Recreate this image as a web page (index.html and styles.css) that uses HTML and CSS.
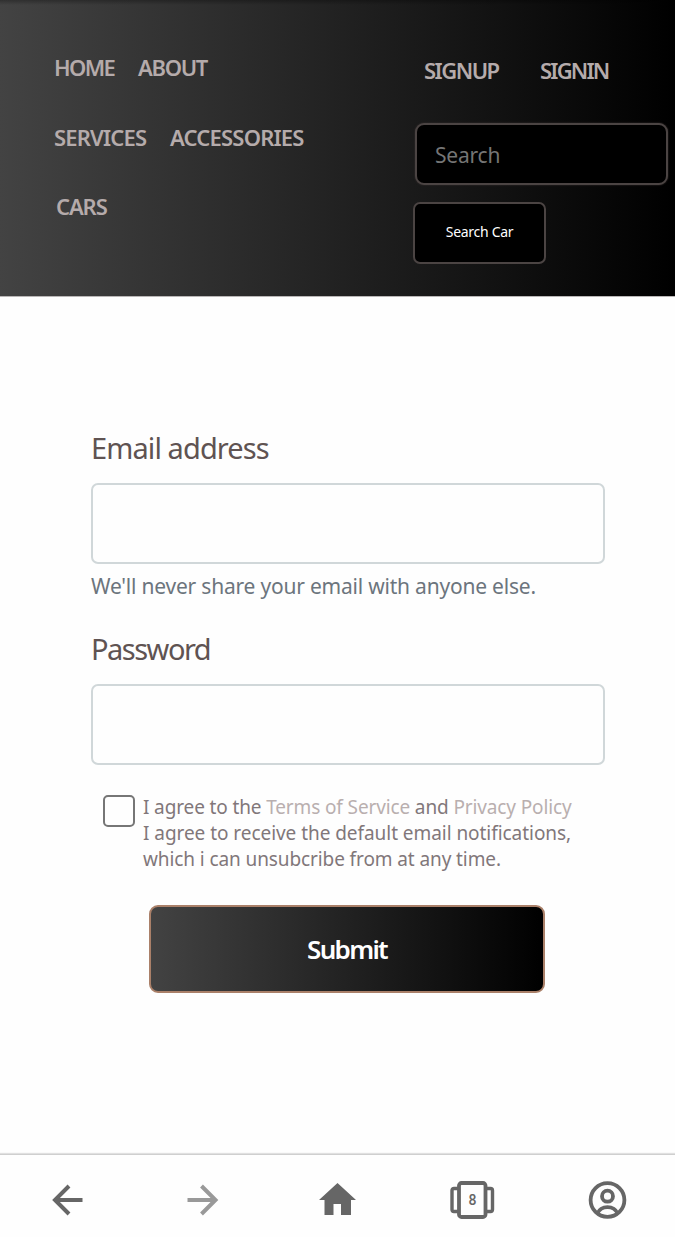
FILE: index.html
```html
<!DOCTYPE html>
<html lang="en">
<head>
<meta charset="utf-8">
<meta name="viewport" content="width=device-width, initial-scale=1">
<title>Sign in</title>
<link rel="stylesheet" href="styles.css">
</head>
<body>
<header class="header">
  <nav class="menu">
    <div class="menu-row"><a class="link home">HOME</a><a class="link about">ABOUT</a></div>
    <div class="menu-row"><a class="link services">SERVICES</a><a class="link accessories">ACCESSORIES</a></div>
    <div class="menu-row last"><a class="link cars">CARS</a></div>
  </nav>
  <div class="tools">
    <div class="account"><a class="link signup">SIGNUP</a><a class="link signin">SIGNIN</a></div>
    <input class="search" type="text" placeholder="Search">
    <button class="search-button">Search Car</button>
  </div>
</header>
<main class="content">
  <form class="form">
    <label class="label email" for="email">Email address</label>
    <input class="field" id="email" type="text">
    <p class="hint">We'll never share your email with anyone else.</p>
    <label class="label password" for="password">Password</label>
    <input class="field" id="password" type="password">
    <div class="agree">
      <input class="check" type="checkbox">
      <div class="terms">
        <div class="line1">I agree to the <a class="terms-link">Terms of Service</a> and <a class="terms-link">Privacy Policy</a></div>
        <div class="line2">I agree to receive the default email notifications,</div>
        <div class="line3">which i can unsubcribe from at any time.</div>
      </div>
    </div>
    <button class="submit" type="button">Submit</button>
  </form>
</main>
<footer class="toolbar">
  <div class="tab"><svg width="46" height="46" viewBox="0 0 46 46" fill="none" stroke="#666" stroke-width="4"><path d="M37.500 23H10M24 9L10 23l14 14"/></svg></div>
  <div class="tab"><svg width="46" height="46" viewBox="0 0 46 46" fill="none" stroke="#999" stroke-width="4"><path d="M7.500 23H35M21.500 9l14 14-14 14"/></svg></div>
  <div class="tab"><svg width="46" height="46" viewBox="0 0 46 46"><path fill="#666" d="M22.500 6L4 23h5.500v15h9V27h7.500v11h10V23h5z"/></svg></div>
  <div class="tab"><svg width="46" height="46" viewBox="0 0 46 46" fill="none" stroke="#666"><rect x="9" y="6" width="26.500" height="34" rx="2.500" stroke-width="3.800"/><path d="M8.500 11.500H4q-2 0-2 2v19q0 2 2 2h4.500M36 11.500h4.500q2 0 2 2v19q0 2-2 2H36" stroke-width="3.400"/><text class="count" x="22.500" y="28.200" text-anchor="middle">8</text></svg></div>
  <div class="tab"><svg width="46" height="46" viewBox="0 0 46 46" fill="none" stroke="#666" stroke-width="3.800"><circle cx="22.500" cy="23" r="16.900"/><circle cx="22.500" cy="19.200" r="5.500"/><path d="M12.300 36.500c2-4.400 5.500-6.400 10.200-6.400s8.200 2 10.200 6.400"/></svg></div>
</footer>
</body>
</html>
```
FILE: styles.css
```css
* { box-sizing: border-box; }
body {
  margin: 0;
  height: 1237px;
  display: flex;
  flex-direction: column;
  background: #fefefe;
  font-family: "Noto Sans", sans-serif;
}
.header {
  height: 297px;
  display: flex;
  background: linear-gradient(to bottom, rgba(0,0,0,.28), transparent 5px), linear-gradient(to right, #434343, #000);
  border-bottom: 1px solid #b9b6b6;
}
.menu { width: 413px; padding: 32px 0 0 54px; }
.menu-row { display: flex; gap: 23px; height: 69.500px; line-height: 70px; }
.menu-row.last { padding-left: 2px; }
.link { color: #b5abab; font-size: 22px; font-weight: 600; white-space: nowrap; }
.home { width: 61px; letter-spacing: -1.600px; }
.about { letter-spacing: -1.300px; }
.services { width: 93px; letter-spacing: -.85px; }
.accessories { letter-spacing: -.8px; }
.cars { letter-spacing: -1.100px; }
.tools { width: 254px; padding-top: 49px; }
.account { display: flex; height: 74px; padding-left: 11px; line-height: 42px; }
.signup { width: 116px; letter-spacing: -1.500px; }
.signin { letter-spacing: -1.800px; }
.search {
  display: block;
  width: 253px;
  height: 62px;
  margin: 0 0 17px 2px;
  padding: 2px 18px 0;
  border: 2px solid #4b4443;
  border-radius: 9px;
  outline: none;
  background: #000;
  color: #fff;
  font: 21px "Noto Sans", sans-serif;
  letter-spacing: -.2px;
  box-shadow: 0 0 2px #3b3332;
}
.search::placeholder { color: #757575; opacity: 1; }
.search-button {
  display: block;
  width: 133px;
  height: 62px;
  padding: 0 0 3px;
  border: 2px solid #4b4443;
  border-radius: 7px;
  background: #000;
  color: #fff;
  font: 14px "Noto Sans", sans-serif;
  letter-spacing: -.3px;
}
.content { flex: 1; padding: 131px 70px 0 91px; }
.form { display: flex; flex-direction: column; }
.label { height: 55px; line-height: 40px; font-size: 29px; color: #5f5352; white-space: nowrap; }
.email { letter-spacing: -.9px; }
.password { letter-spacing: -1.500px; }
.field {
  width: 514px;
  height: 81px;
  padding: 0 18px;
  border: 2px solid #d0d7d9;
  border-radius: 7px;
  background: #fefefe;
  font-size: 29px;
}
.hint { margin: 7px 0 28px; height: 30px; line-height: 30px; font-size: 21px; color: #6c757d; letter-spacing: -.21px; white-space: nowrap; }
.agree { display: flex; gap: 8px; margin-top: 29px; padding-left: 12px; }
.check {
  appearance: none;
  flex: none;
  width: 32px;
  height: 32px;
  margin: 1px 0 0;
  border: 2px solid #767676;
  border-radius: 5px;
  background: #fefefe;
}
.terms { line-height: 26.200px; font-size: 19px; color: #81777a; white-space: nowrap; }
.line1 { letter-spacing: -.13px; }
.line2 { letter-spacing: -.05px; }
.line3 { letter-spacing: -.1px; }
.terms-link { color: #b9afaf; }
.submit {
  width: 396px;
  height: 88px;
  margin: 32px 0 0 58px;
  border: 2px solid #aa8069;
  border-radius: 9px;
  background: linear-gradient(to right, #434343, #000) border-box;
  color: #fff;
  font: 600 26px "Noto Sans", sans-serif;
  letter-spacing: -1.700px;
}
.toolbar {
  height: 83px;
  display: flex;
  border-top: 1px solid #cfcfcf;
  background: #fefefe;
  box-shadow: 0 -1px 1px #e0e0e0;
}
.tab { flex: 1; display: flex; justify-content: center; padding-top: 22px; }
.count { fill: #666; stroke: none; font: 500 14px Roboto, sans-serif; }
```
